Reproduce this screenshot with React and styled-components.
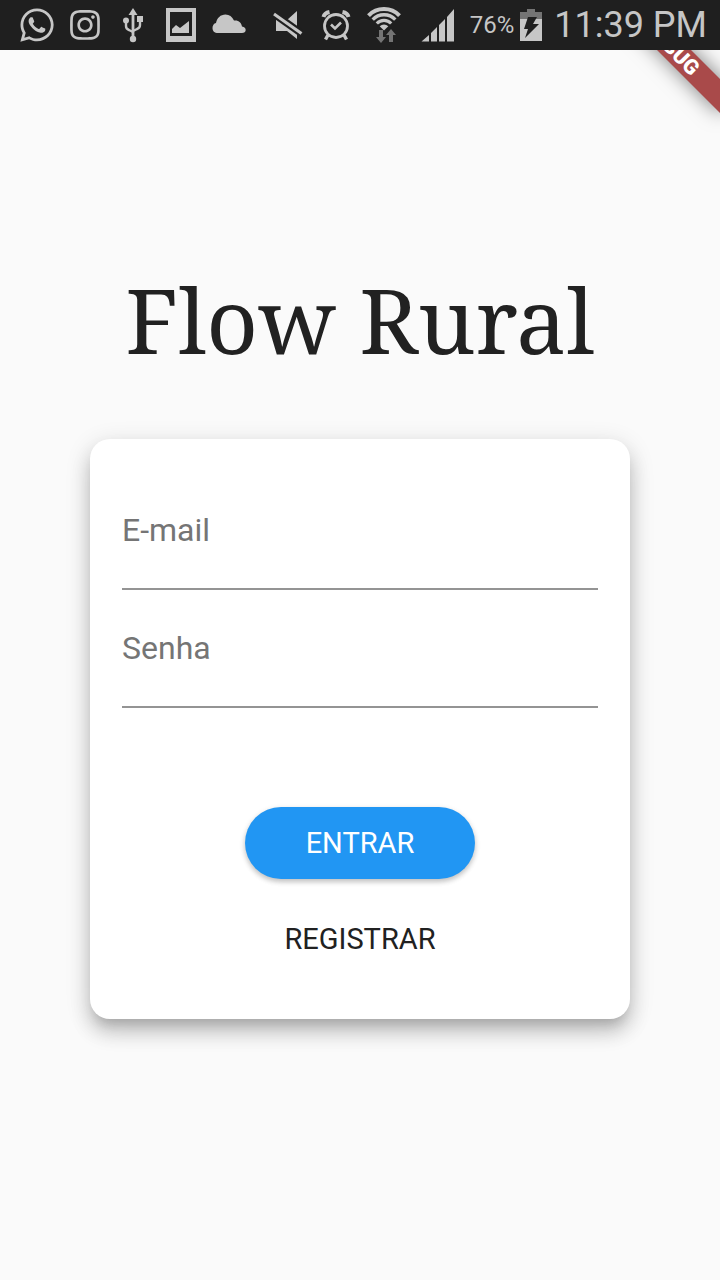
import React from "react";
import styled, { createGlobalStyle } from "styled-components";
import { FaWhatsapp, FaInstagram } from "react-icons/fa";

const GlobalStyle = createGlobalStyle`
  *, *::before, *::after { box-sizing: border-box; }
  body {
    margin: 0;
    background: #fafafa;
    color: #212121;
    font-family: Roboto, "Liberation Sans", sans-serif;
  }
`;

const Screen = styled.div`
  position: relative;
  min-height: 100vh;
  overflow: hidden;
  background: #fafafa;
`;

const StatusBar = styled.header`
  position: relative;
  z-index: 2;
  display: flex;
  align-items: center;
  height: 50px;
  padding: 0 13px;
  background: #1f1f1f;
  color: #c6c6c6;
`;

const IconGroup = styled.div`
  display: flex;
  align-items: center;
  margin-left: ${(p) => (p.$end ? "auto" : "0")};
`;

const IconSlot = styled.span`
  display: flex;
  justify-content: center;
  align-items: center;
  width: 48px;
  height: 50px;

  svg { display: block; }
`;

const BatteryGroup = styled.div`
  display: flex;
  align-items: center;
  margin-left: 13px;
`;

const BatteryLevel = styled.span`
  margin: 0 6px 0 15px;
  font-size: 24px;
  line-height: 50px;
`;

const Clock = styled.time`
  margin-left: 12px;
  font-size: 36px;
  line-height: 50px;
  white-space: nowrap;
`;

const Banner = styled.div`
  position: absolute;
  z-index: 1;
  top: 36px;
  right: -32px;
  width: 160px;
  height: 24px;
  transform: rotate(45deg);
  background: #a94a4a;
  box-shadow: 0 0 20px rgba(0, 0, 0, 0.5);
  color: #ffffff;
  font-size: 21px;
  font-weight: 900;
  line-height: 24px;
  text-align: center;
`;

const Main = styled.main`
  display: flex;
  flex-direction: column;
  align-items: center;
  padding: 211px 0 64px;
`;

const Title = styled.h1`
  margin: 0 0 62px;
  font-family: "Noto Serif", "DejaVu Serif", serif;
  font-size: 90px;
  font-weight: 400;
  line-height: 116px;
  white-space: nowrap;
`;

const Card = styled.form`
  display: flex;
  flex-direction: column;
  align-items: center;
  width: 75%;
  padding: 33px 32px 44px;
  border-radius: 20px;
  background: #ffffff;
  box-shadow:
    0 10px 12px -6px rgba(0, 0, 0, 0.14),
    0 14px 20px 0 rgba(0, 0, 0, 0.16),
    0 6px 24px 2px rgba(0, 0, 0, 0.12);
`;

const Field = styled.input`
  width: 100%;
  height: 118px;
  padding: 0;
  border: 0;
  border-bottom: 2px solid #949494;
  border-radius: 0;
  outline: 0;
  background: transparent;
  color: #212121;
  font: 400 32px Roboto, "Liberation Sans", sans-serif;

  &::placeholder { color: #757575; opacity: 1; }
`;

const Actions = styled.div`
  display: flex;
  flex-direction: column;
  align-items: center;
  gap: 24px;
  margin-top: 99px;
`;

const Button = styled.button`
  min-width: 230px;
  height: 72px;
  padding: 0 32px;
  border: 0;
  border-radius: 36px;
  background: ${(p) => (p.$primary ? "#2196f3" : "transparent")};
  box-shadow: ${(p) =>
    p.$primary
      ? "0 3px 5px rgba(0, 0, 0, 0.16), 0 2px 6px rgba(0, 0, 0, 0.12)"
      : "none"};
  color: ${(p) => (p.$primary ? "#ffffff" : "#212121")};
  font: 400 29px Roboto, "Liberation Sans", sans-serif;
  cursor: pointer;
`;

const UsbIcon = () => (
  <svg width="24" height="36" viewBox="0 0 24 36" fill="none" stroke="currentColor" strokeWidth="2.4">
    <path d="M12 6v25" strokeWidth="2.8" />
    <path d="M12 1l4.500 7h-9z" fill="currentColor" stroke="none" />
    <path d="M5 14v5q0 3 3 4l4 2M19 12v6q0 3-3 4l-4 2" />
    <circle cx="5" cy="13.500" r="3" fill="currentColor" stroke="none" />
    <path d="M16 9h6v6h-6z" fill="currentColor" stroke="none" />
    <circle cx="12" cy="32" r="3.200" fill="currentColor" stroke="none" />
  </svg>
);

const PictureIcon = () => (
  <svg width="30" height="34" viewBox="0 0 30 34" fill="currentColor">
    <path fillRule="evenodd" d="M0 0h30v34H0zM4 4v24h22V4z" />
    <path d="M6 25v-4l4-4 4 3 9-7v12z" />
  </svg>
);

const CloudIcon = () => (
  <svg width="34" height="22" viewBox="0 0 34 22" fill="currentColor">
    <path d="M6 19C2.500 19 .5 17 .5 14c0-2.700 1.300-4.500 3.500-5C5 4 8.500.5 13.500.5c4 0 6.500 2 8.500 6 4.500-.6 7.300 1.800 8 6 2.500.3 3.700 1.600 3.700 3.500 0 2-1.500 3-3.700 3z" />
  </svg>
);

const MutedIcon = () => (
  <svg width="30" height="30" viewBox="0 0 30 30">
    <path d="M3 10h11L24 1v28l-10-8H3z" fill="currentColor" />
    <path d="M-1 2.500l31 22" stroke="#1f1f1f" strokeWidth="7.500" />
    <path d="M1 4l27.500 19.500" stroke="currentColor" strokeWidth="3" />
  </svg>
);

const AlarmIcon = () => (
  <svg width="30" height="32" viewBox="0 0 30 32" fill="none" stroke="currentColor">
    <circle cx="15" cy="17" r="11.500" strokeWidth="2.800" />
    <path d="M2.500 8Q3.500 4 8.500 3M27.500 8q-1-4-6-5" strokeWidth="4" />
    <path d="M7 26l-2.500 4.500M23 26l2.500 4.500" strokeWidth="3.400" />
    <path d="M10 15.500l4 4 6-6" strokeWidth="2.600" />
  </svg>
);

const WifiIcon = () => (
  <svg width="36" height="36" viewBox="0 0 36 36" fill="none" stroke="currentColor">
    <path d="M2.500 8.600A21.500 21.500 0 0 1 33.500 8.600" strokeWidth="4" />
    <path d="M6.700 12.600A15.700 15.700 0 0 1 29.300 12.600" strokeWidth="3.400" />
    <path d="M10.800 16.500A10 10 0 0 1 25.200 16.500" strokeWidth="3.200" />
    <path d="M13.700 19.300a6 6 0 0 1 8.600 0L18 23.500z" fill="currentColor" stroke="none" />
    <path d="M13 23h4v7h3l-5 6-5-6h3zM23 35v-7h-3l5-6 5 6h-3v7z" fill="#747474" stroke="none" />
  </svg>
);

const SignalIcon = () => (
  <svg width="34" height="34" viewBox="0 0 34 34" fill="currentColor">
    <path d="M0.500 33.500L8 27v6.500zM10 25l6-6v14.500h-6zM18 17l6-6v22.500h-6zM26 9l7-8v32.500h-7z" />
  </svg>
);

const BatteryIcon = () => (
  <svg width="22" height="32" viewBox="0 0 22 32">
    <path d="M0 3h7V0h8v3h7v7H0z" fill="#747474" />
    <path d="M0 10h22v22H0z" fill="#c6c6c6" />
    <path d="M8 8h9l-4 7h6L5 29l3-9H4z" fill="#1f1f1f" />
  </svg>
);

export default function App() {
  return (
    <Screen>
      <GlobalStyle />
      <StatusBar>
        <IconGroup>
          <IconSlot><FaWhatsapp size={38} /></IconSlot>
          <IconSlot><FaInstagram size={34} /></IconSlot>
          <IconSlot><UsbIcon /></IconSlot>
          <IconSlot><PictureIcon /></IconSlot>
          <IconSlot><CloudIcon /></IconSlot>
        </IconGroup>
        <IconGroup $end>
          <IconSlot><MutedIcon /></IconSlot>
          <IconSlot><AlarmIcon /></IconSlot>
          <IconSlot><WifiIcon /></IconSlot>
        </IconGroup>
        <BatteryGroup>
          <SignalIcon />
          <BatteryLevel>76%</BatteryLevel>
          <BatteryIcon />
        </BatteryGroup>
        <Clock>11:39 PM</Clock>
      </StatusBar>
      <Banner>DEBUG</Banner>
      <Main>
        <Title>Flow Rural</Title>
        <Card onSubmit={(e) => e.preventDefault()}>
          <Field type="email" placeholder="E-mail" aria-label="E-mail" />
          <Field type="password" placeholder="Senha" aria-label="Senha" />
          <Actions>
            <Button type="submit" $primary>ENTRAR</Button>
            <Button type="button">REGISTRAR</Button>
          </Actions>
        </Card>
      </Main>
    </Screen>
  );
}
